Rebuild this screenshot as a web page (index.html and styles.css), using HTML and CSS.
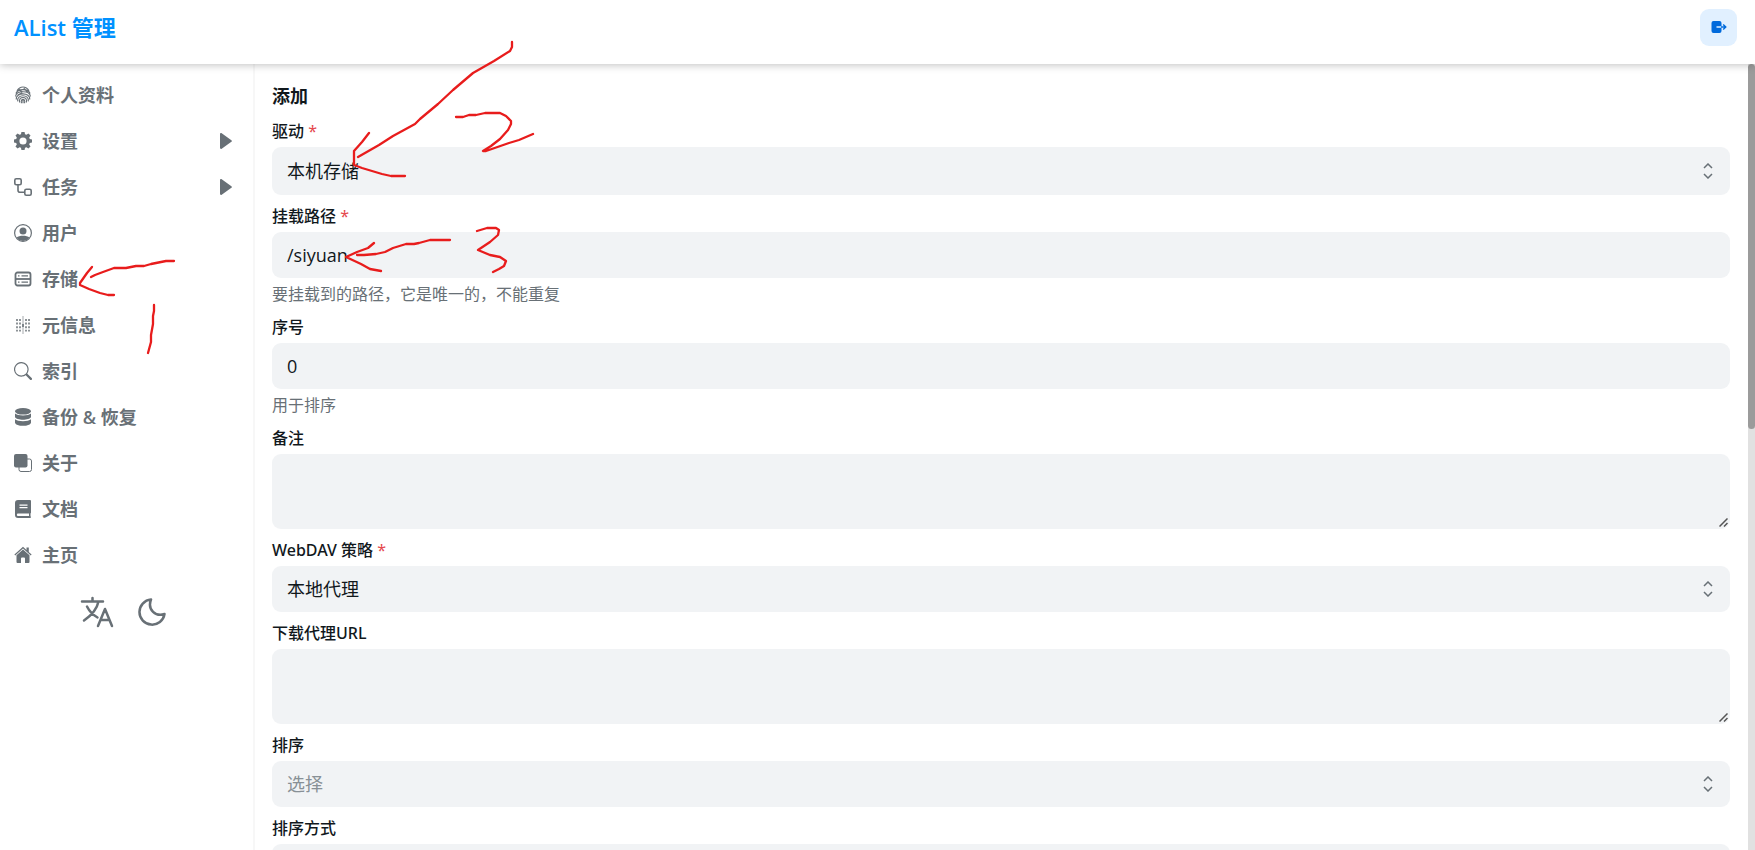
FILE: index.html
```
<!DOCTYPE html>
<html lang="zh-CN">
<head>
  <meta charset="UTF-8">
  <meta name="viewport" content="width=device-width, initial-scale=1.0">
  <title>AList 管理</title>
  <link rel="stylesheet" href="styles.css">
</head>
<body>
  <header class="header">
    <a class="logo" href="#">AList 管理</a>
    <button class="logout" type="button" aria-label="退出">
      <svg width="16" height="14" viewBox="0 0 16 14"><path fill="currentColor" d="M2.500 1h6A2 2 0 0 1 10.500 3v3.200H5.500v1.600h5V11a2 2 0 0 1-2 2h-6a2 2 0 0 1-2-2V3a2 2 0 0 1 2-2z"/><path d="M10 7h4.500M12.200 4.400 14.800 7l-2.600 2.600" fill="none" stroke="currentColor" stroke-width="1.400"/></svg>
    </button>
  </header>

  <div class="layout">
    <nav class="sidebar">
      <ul class="menu">
        <li><a href="#">
          <svg class="icon" viewBox="0 0 24 24" fill="none" stroke="currentColor" stroke-width="1.500"><path d="M4 6.500C8-.5 16-.5 20 6.500M2.500 10C5 3 19 3 21.500 10M2 14C3 5.500 21 5.500 22 14M3 18C2 8 22 8 21 18M5 20.500C3 10.500 21 10.500 19 20.500M7.500 22c-2.500-9 11.500-9 9 0M10 23c-2-7 6-7 4 0M12 17v6M6 4l5 4M13 3l5 5M5 12l6-3"/></svg>
          个人资料</a></li>
        <li><a href="#">
          <svg class="icon" viewBox="0 0 16 16" fill="currentColor"><path fill-rule="evenodd" d="M6.600 0h2.800l.4 2 1.300.5L12.800 1.300l1.900 1.900-1.200 1.700.5 1.300 2 .4v2.800l-2 .4-.5 1.300 1.200 1.700-1.900 1.900-1.700-1.200-1.300.5-.4 2H6.600l-.4-2-1.300-.5-1.700 1.200-1.900-1.900 1.200-1.700L2 9.800l-2-.4V6.600l2-.4.5-1.300-1.200-1.700 1.900-1.900 1.700 1.200L6.200 2zM8 4.800a3.200 3.200 0 1 0 0 6.400 3.200 3.200 0 0 0 0-6.400z"/></svg>
          设置
          <svg class="caret" viewBox="0 0 12 16" fill="currentColor"><path d="M0 1.200C0 .2.900-.2 1.700.300l9.700 6.900c.7.500.7 1.100 0 1.600l-9.700 6.900c-.8.500-1.700.1-1.700-.9z"/></svg></a></li>
        <li><a href="#">
          <svg class="icon" viewBox="0 0 18 18" fill="none" stroke="currentColor" stroke-width="1.600"><rect x=".8" y=".8" width="6.400" height="6" rx="1.500"/><rect x="10.800" y="11.200" width="6.400" height="6" rx="1.500"/><path d="M4 6.700v5.500a2 2 0 0 0 2 2h4.700"/></svg>
          任务
          <svg class="caret" viewBox="0 0 12 16" fill="currentColor"><path d="M0 1.200C0 .2.900-.2 1.700.300l9.700 6.900c.7.500.7 1.100 0 1.600l-9.700 6.900c-.8.500-1.700.1-1.700-.9z"/></svg></a></li>
        <li><a href="#">
          <svg class="icon" viewBox="0 0 18 18"><circle cx="9" cy="9" r="8.400" fill="none" stroke="currentColor" stroke-width="1.200"/><circle cx="9" cy="7" r="3.500" fill="currentColor"/><path fill="currentColor" d="M2.600 13.600C5 11 13 11 15.400 13.600 13 18 5 18 2.600 13.600z"/></svg>
          用户</a></li>
        <li><a href="#">
          <svg class="icon" viewBox="0 0 18 18" fill="none" stroke="currentColor" stroke-width="1.800"><rect x="1.500" y="2.500" width="15" height="13" rx="2"/><path d="M1.500 9h15"/><path stroke-width="1.300" d="M7.500 5.800h6.500M7.500 12.200h6.500M4 5.800h1.500M4 12.200h1.500"/></svg>
          存储</a></li>
        <li><a href="#">
          <svg class="icon" viewBox="0 0 18 18" fill="none" stroke="currentColor"><path stroke-width="1.500" stroke-dasharray="2 1.600" d="M3 3v12.500M6 3v12.500M12 3v12.500M15 3v12.500"/><path stroke-width=".6" d="M9 0v18"/><path stroke-width="1.600" d="M9 8v3"/></svg>
          元信息</a></li>
        <li><a href="#">
          <svg class="icon" viewBox="0 0 16 16" fill="currentColor"><path d="M11.742 10.344a6.500 6.500 0 1 0-1.397 1.398h-.001c.03.04.062.078.098.115l3.850 3.850a1 1 0 0 0 1.415-1.414l-3.850-3.850a1.007 1.007 0 0 0-.115-.1zM12 6.500a5.500 5.500 0 1 1-11 0 5.500 5.500 0 0 1 11 0z"/></svg>
          索引</a></li>
        <li><a href="#">
          <svg class="icon" viewBox="0 0 18 18" fill="currentColor"><ellipse cx="9" cy="3.300" rx="8" ry="3.300"/><path d="M1 5.500c2.500 2.600 13.500 2.600 16 0V9c-1.500 3.600-14.500 3.600-16 0zM1 11.200c2.500 2.600 13.500 2.600 16 0v3.500c-1.500 4.200-14.500 4.200-16 0z"/></svg>
          备份 &amp; 恢复</a></li>
        <li><a href="#">
          <svg class="icon" viewBox="0 0 18 18"><rect x="5" y="5" width="12.500" height="12.500" rx="2" fill="none" stroke="currentColor"/><rect width="13.500" height="13.500" rx="2" fill="currentColor"/></svg>
          关于</a></li>
        <li><a href="#">
          <svg class="icon" viewBox="0 0 18 18" fill="currentColor"><path fill-rule="evenodd" d="M4 0h12a1 1 0 0 1 1 1v11.500a1 1 0 0 1-.5.900v2.900c.6.300.6 1.700-.3 1.700H4a3 3 0 0 1-3-3V3a3 3 0 0 1 3-3zM5.500 4.500v1.200h8V4.500zm0 2.500v1.200h8V7zM4 13.500c-1.500 0-1.500 2.500 0 2.500h11v-2.500z"/></svg>
          文档</a></li>
        <li><a href="#">
          <svg class="icon" viewBox="0 0 18 18" fill="currentColor"><path d="M9 3.400l6.500 5.800V16a1 1 0 0 1-1 1H11v-4.500a1 1 0 0 0-1-1H8a1 1 0 0 0-1 1V17H3.500a1 1 0 0 1-1-1V9.200z"/><path d="M9 .8l3.500 3.100V1.500h2.300v4.400L17.600 8.500l-.8.900L9 2.400 1.200 9.400l-.8-.9z"/></svg>
          主页</a></li>
      </ul>
      <div class="tools">
        <button type="button" aria-label="语言">
          <svg width="34" height="34" viewBox="0 0 34 34" fill="none" stroke="currentColor" stroke-width="2.500" stroke-linecap="round" stroke-linejoin="round"><path d="M2 6.500h21M12.500 3v3.500M18.500 6.500C17 14 12 20 4 25.500M7 11.500c2.500 5 6 8.500 10.500 11M18 31l7-17 7 17M20.500 25h9"/></svg>
        </button>
        <button type="button" aria-label="深色模式">
          <svg width="28" height="28" viewBox="0 0 28 28" fill="none" stroke="currentColor" stroke-width="2.500" stroke-linejoin="round"><path d="M13 1.500A12.600 12.600 0 1 0 26.500 16C18 19 9 12 13 1.500z"/></svg>
        </button>
      </div>
    </nav>

    <main class="content">
      <form class="form">
        <h1>添加</h1>
        <div class="field">
          <label for="driver">驱动 <span class="required">*</span></label>
          <select class="control driver" id="driver"><option>本机存储</option></select>
        </div>
        <div class="field">
          <label for="mount-path">挂载路径 <span class="required">*</span></label>
          <input class="control" id="mount-path" type="text" value="/siyuan">
          <p class="help">要挂载到的路径，它是唯一的，不能重复</p>
        </div>
        <div class="field">
          <label for="order">序号</label>
          <input class="control" id="order" type="text" value="0">
          <p class="help">用于排序</p>
        </div>
        <div class="field">
          <label for="remark">备注</label>
          <textarea class="control" id="remark"></textarea>
        </div>
        <div class="field">
          <label for="webdav">WebDAV 策略 <span class="required">*</span></label>
          <select class="control" id="webdav"><option>本地代理</option></select>
        </div>
        <div class="field">
          <label for="proxy-url">下载代理URL</label>
          <textarea class="control" id="proxy-url"></textarea>
        </div>
        <div class="field">
          <label for="order-by">排序</label>
          <select class="control placeholder" id="order-by"><option>选择</option></select>
        </div>
        <div class="field">
          <label for="order-direction">排序方式</label>
          <select class="control placeholder" id="order-direction"><option>选择</option></select>
        </div>
      </form>
    </main>
    <div class="scrollbar"><div class="thumb"></div></div>
  </div>

  <!-- hand-drawn step marks over the page -->
  <svg class="marks" width="560" height="360" viewBox="0 0 560 360" aria-hidden="true">
    <path d="M174 261h-8l-15 3-7 2h-8l-10 2h-12l-11 4-8 3-4 2M92 267l-5 6-7 10v2l9 4 11 4 8 2h6"/>
    <path d="M154 305v6l-1 5v8l-2 11v7l-3 11"/>
    <path d="M512 42v5l-2 4-16 10-21 12-20 17-15 14-18 15-5 5-22 12-14 9-21 12M369 133l-7 9-8 9v14l8 3 10 3 10 3 9 2h14"/>
    <path d="M456 117h7l6-2h7l9-2h15l6 3 5 5v3l-3 6-8 9-9 7-8 5h3l23-8 10-3 14-6"/>
    <path d="M450 240h-20l-11 3-5 1h-8l-13 4-8 4-9 2-12 1h-7M374 243l-6 5-11 4-11 5 15 7 9 5 11 2"/>
    <path d="M477 231l10-3h9l3 2-1 5-8 7-12 8 12 5 10 2 6 4-2 5-5 3-6 3"/>
  </svg>
</body>
</html>
```
FILE: styles.css
```
* {
  box-sizing: border-box;
}
body {
  display: flex;
  flex-direction: column;
  height: 100vh;
  margin: 0;
  overflow: hidden;
  background: #fff;
  color: #11181c;
  font-family: "Open Sans", "Noto Sans CJK SC", sans-serif;
  font-size: 18px;
  line-height: 27px;
}
button {
  border: none;
  padding: 0;
  cursor: pointer;
}
.header {
  display: flex;
  flex-shrink: 0;
  align-items: center;
  justify-content: space-between;
  height: 64px;
  padding: 0 18px 10px 14px;
  box-shadow: 0 1px 8px rgba(0, 0, 0, 0.25);
  z-index: 1;
}
.logo {
  color: #0091ff;
  font-size: 22px;
  font-weight: 600;
  text-decoration: none;
}
.logout {
  display: flex;
  align-items: center;
  justify-content: center;
  width: 37px;
  height: 37px;
  border-radius: 9px;
  background: #e1f0ff;
  color: #006adc;
}
.layout {
  display: flex;
  flex: 1;
  min-height: 0;
}
.sidebar {
  width: 255px;
  flex-shrink: 0;
  padding: 8px 0;
  border-right: 2px solid #f7f7f7;
  color: #687076;
}
.menu {
  list-style: none;
  margin: 0;
  padding: 0;
}
.menu a {
  display: flex;
  align-items: center;
  gap: 10px;
  height: 46px;
  padding: 0 21px 0 14px;
  color: inherit;
  font-weight: 600;
  text-decoration: none;
}
.icon {
  width: 18px;
  height: 18px;
}
.caret {
  width: 12px;
  height: 16px;
  margin-left: auto;
}
.tools {
  display: flex;
  align-items: center;
  justify-content: center;
  gap: 24px;
  margin-top: 17px;
  padding-right: 7px;
}
.tools button {
  display: flex;
  background: none;
  color: inherit;
}
.content {
  flex: 1;
  min-width: 0;
  padding: 19px 18px 0 17px;
  overflow: hidden;
}
.scrollbar {
  flex-shrink: 0;
  width: 7px;
  background: #e1e1e1;
}
.thumb {
  height: 46.5%;
  border-radius: 4px;
  background: #9b9b9b;
}
.form {
  display: flex;
  flex-direction: column;
  gap: 9px;
}
h1 {
  margin: 0;
  font-size: 18px;
  font-weight: 700;
  line-height: 27px;
}
.field {
  display: flex;
  flex-direction: column;
  gap: 4px;
}
label {
  font-family: "Noto Sans", "Noto Sans CJK SC", sans-serif;
  font-size: 16px;
  font-weight: 500;
  line-height: 24px;
}
.required {
  color: #e5484d;
  font-weight: 400;
}
.control {
  width: 100%;
  height: 46px;
  border: none;
  border-radius: 9px;
  padding: 0 15px;
  background-color: #f1f3f5;
  color: #11181c;
  font: inherit;
}
select.control {
  appearance: none;
  background-image: url("data:image/svg+xml,%3Csvg xmlns='http://www.w3.org/2000/svg' width='10' height='16' viewBox='0 0 10 16' fill='none' stroke='%23687076' stroke-width='1.500'%3E%3Cpath d='M1 5l4-4 4 4M1 11l4 4 4-4'/%3E%3C/svg%3E");
  background-position: right 17px center;
  background-repeat: no-repeat;
}
.control.driver {
  height: 48px;
}
.control.placeholder {
  color: #889096;
}
textarea.control {
  height: 75px;
  resize: vertical;
  background-image: url("data:image/svg+xml,%3Csvg xmlns='http://www.w3.org/2000/svg' width='9' height='9' viewBox='0 0 9 9' fill='none' stroke='%23555' stroke-width='1.500'%3E%3Cpath d='M.5 8.500l8-8M5 8.500l3.500-3.500'/%3E%3C/svg%3E");
  background-position: right 2px bottom 2px;
  background-repeat: no-repeat;
}
textarea.control::-webkit-resizer {
  background: transparent;
}
.help {
  margin: 0;
  color: #687076;
  font-size: 16px;
  line-height: 24px;
}
.marks {
  position: absolute;
  top: 0;
  left: 0;
  z-index: 2;
  pointer-events: none;
  fill: none;
  stroke: #e81c1c;
  stroke-width: 2.300;
  stroke-linecap: round;
  stroke-linejoin: round;
}
```
